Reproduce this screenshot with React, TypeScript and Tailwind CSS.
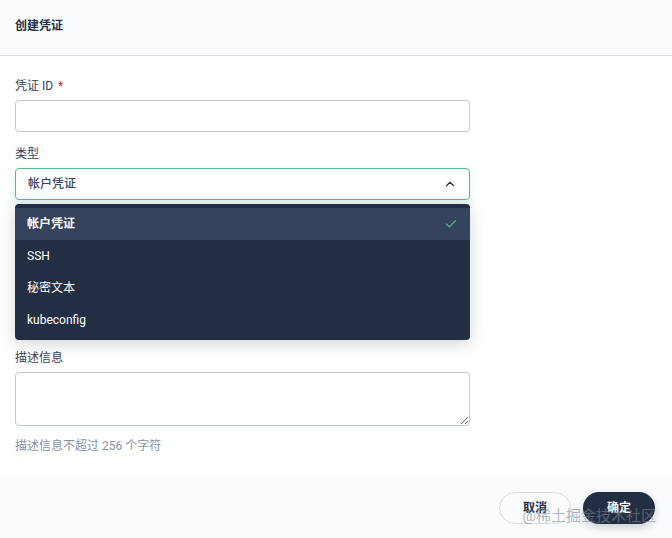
import { Check, ChevronUp } from "lucide-react";

const options = ["帐户凭证", "SSH", "秘密文本", "kubeconfig"];

const App = () => {
  return (
    <div
      className="w-[672px] h-[538px] bg-white flex flex-col text-[12px] text-[#242e42] overflow-hidden"
      style={{ fontFamily: 'Roboto, "Noto Sans CJK SC", sans-serif' }}
    >
      {/* Header */}
      <div className="h-[56px] shrink-0 bg-[#f9fbfd] border-b border-[#d8dee5] px-[15px] pt-[20px]">
        <span className="font-semibold text-[12px] leading-[12px] block">创建凭证</span>
      </div>

      {/* Body */}
      <div className="flex-1 px-[15px] pt-[22px]">
        <div className="w-[455px]">
          <div className="text-[#36435c] leading-[16px] mb-[6px]">
            凭证 ID <span className="text-[#ca2621] ml-[2px]">*</span>
          </div>
          <div className="h-[32px] rounded-[4px] border border-[#c1c9d1] bg-white" />

          <div className="text-[#36435c] leading-[16px] mt-[14px] mb-[6px]">类型</div>
          <div className="relative">
            <div className="h-[32px] rounded-[4px] border border-[#55bc8a] bg-white flex items-center justify-between px-[12px] shadow-[0_4px_8px_0_rgba(85,188,138,0.2)]">
              <span className="font-medium text-[#36435c]">帐户凭证</span>
              <ChevronUp className="w-[14px] h-[14px] text-[#242e42]" strokeWidth={2} />
            </div>

            {/* Dropdown menu */}
            <div className="absolute left-0 right-0 top-[36px] z-10 rounded-[4px] bg-[#242e42] py-[4px] shadow-[0_4px_16px_0_rgba(36,46,66,0.2)]">
              {options.map((o, i) => (
                <div
                  key={o}
                  className={
                    i === 0
                      ? "h-[32px] flex items-center justify-between px-[12px] bg-[#36435c] text-white font-semibold"
                      : "h-[32px] flex items-center justify-between px-[12px] text-white"
                  }
                >
                  <span>{o}</span>
                  {i === 0 && <Check className="w-[14px] h-[14px] text-[#55bc8a]" strokeWidth={2} />}
                </div>
              ))}
            </div>
          </div>

          {/* space under the open menu */}
          <div className="h-[150px]" />

          <div className="text-[#36435c] leading-[16px] mb-[6px]">描述信息</div>
          <textarea className="block w-full h-[54px] rounded-[4px] border border-[#c1c9d1] bg-white resize-y outline-none" />
          <div className="text-[#8592a6] leading-[16px] mt-[12px]">描述信息不超过 256 个字符</div>
        </div>
      </div>

      {/* Footer */}
      <div className="h-[62px] shrink-0 bg-[#f9fbfd] flex items-start justify-end gap-[12px] pt-[16px] pr-[17px] relative">
        <button className="h-[32px] w-[72px] rounded-full border border-[#d8dee5] bg-[#f9fbfd] text-[#242e42] font-semibold">
          取消
        </button>
        <button className="h-[32px] w-[72px] rounded-full bg-[#242e42] text-white font-semibold shadow-[0_4px_8px_0_rgba(36,46,66,0.2)]">
          确定
        </button>
        <span className="absolute right-[16px] top-[29px] text-[15px] text-[#7e8794]/60 pointer-events-none">
          @稀土掘金技术社区
        </span>
      </div>
    </div>
  );
};

export default App;
